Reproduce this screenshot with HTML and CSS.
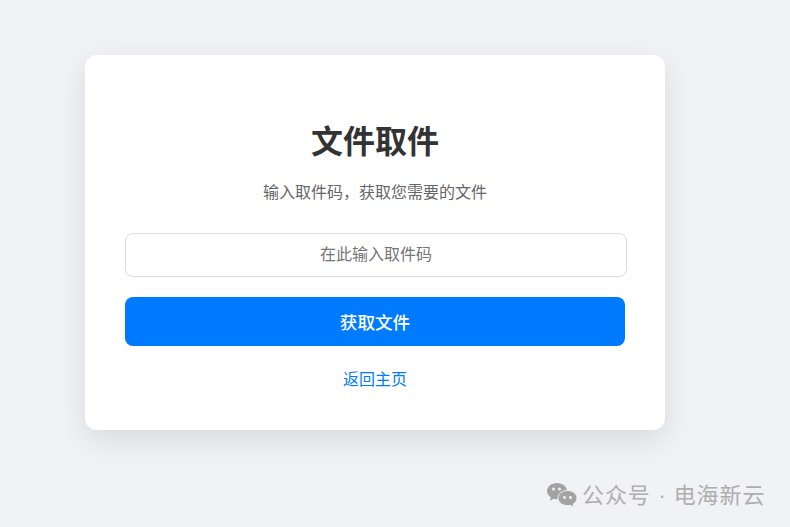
FILE: index.html
```html
<!DOCTYPE html>
<html lang="zh-CN">
<head>
	<meta charset="UTF-8">
	<meta name="viewport" content="width=device-width">
	<title>文件取件</title>

	<link rel="stylesheet" href="styles.css">
</head>
<body>

<main class="card">
	<h1 class="title">文件取件</h1>
	<p class="subtitle">输入取件码，获取您需要的文件</p>

	<input class="code-input" type="text" placeholder="在此输入取件码">
	<button class="submit" type="button">获取文件</button>
	<a class="back-link" href="#">返回主页</a>
</main>

<!-- sits over the page corner, not part of the card flow -->
<div class="watermark">
	<svg class="wechat-icon" viewBox="0 0 32 28" width="32" height="28" aria-hidden="true">
		<path class="bubble" d="M11 1C5.500 1 1 4.600 1 9c0 2.600 1.500 4.800 3.800 6.300L3.900 19l3.900-2.200c1 .3 2.100.4 3.200.4 5.500 0 10-3.600 10-8.100S16.500 1 11 1z"/>
		<circle class="eye" cx="7.500" cy="7" r="1.500"/>
		<circle class="eye" cx="13.500" cy="7" r="1.500"/>
		<path class="bubble front" d="M21.500 8.500c-5.300 0-9.500 3.400-9.500 7.600s4.200 7.600 9.500 7.600c1 0 2-.1 2.900-.4l3.600 2.300-.8-3.500c2.300-1.400 3.800-3.500 3.800-6 0-4.200-4.200-7.600-9.500-7.600z"/>
		<circle class="eye" cx="18.500" cy="15.500" r="1.400"/>
		<circle class="eye" cx="24.500" cy="15.500" r="1.400"/>
	</svg>
	<span class="watermark-text">公众号<span class="dot">·</span>电海新云</span>
</div>

</body>
</html>
```

FILE: styles.css
```css
* {
	margin: 0;
	padding: 0;
}

html {
	height: 100%;
	overflow: hidden;
}

body {
	box-sizing: border-box;
	height: 527px;
	overflow: hidden;
	background-color: #f0f2f5;
	font-family: "Noto Sans CJK SC", "Liberation Sans", sans-serif;
	padding: 55px 125px 0 85px;
}

.card {
	width: 500px;
	height: 295px;
	padding: 40px;
	background-color: #fff;
	border-radius: 12px;
	box-shadow: 0 10px 30px rgba(0, 0, 0, 0.1);
	text-align: center;
}

.title {
	margin-top: 23px;
	font-size: 32px;
	line-height: 42px;
	font-weight: 700;
	color: #333;
}

.subtitle {
	margin-top: 19px;
	font-size: 16px;
	line-height: 24px;
	color: #666;
}

.code-input {
	display: block;
	box-sizing: content-box;
	width: 100%;
	height: 38px;
	padding-bottom: 4px;
	margin-top: 30px;
	border: 1px solid #ddd;
	border-radius: 8px;
	background-color: #fff;
	font-family: inherit;
	font-size: 16px;
	text-align: center;
}

.code-input::placeholder {
	color: #757575;
	opacity: 1;
}

.submit {
	display: block;
	width: 100%;
	height: 49px;
	padding-bottom: 1px;
	margin-top: 20px;
	border: none;
	border-radius: 8px;
	background-color: #007bff;
	color: #fff;
	font-family: inherit;
	font-size: 17.6px;
	font-weight: 500;
}

.back-link {
	display: block;
	margin-top: 20px;
	font-size: 16px;
	line-height: 24px;
	color: #007bff;
	text-decoration: none;
}

.watermark {
	position: absolute;
	left: 546px;
	top: 481px;
	display: flex;
	align-items: center;
	gap: 5px;
	font-size: 22px;
	font-weight: 400;
	line-height: 28px;
	letter-spacing: 0.9px;
	white-space: nowrap;
	color: #aeaeae;
}

.watermark-text {
	margin: -2px 0 0 -1px;
}

.dot {
	display: inline-block;
	width: 23px;
	text-align: center;
	letter-spacing: 0;
	font-family: "Liberation Sans", sans-serif;
}

.bubble {
	fill: #a3a3a3;
}

.front {
	stroke: #f0f2f5;
	stroke-width: 1;
}

.eye {
	fill: #f0f2f5;
}
```
